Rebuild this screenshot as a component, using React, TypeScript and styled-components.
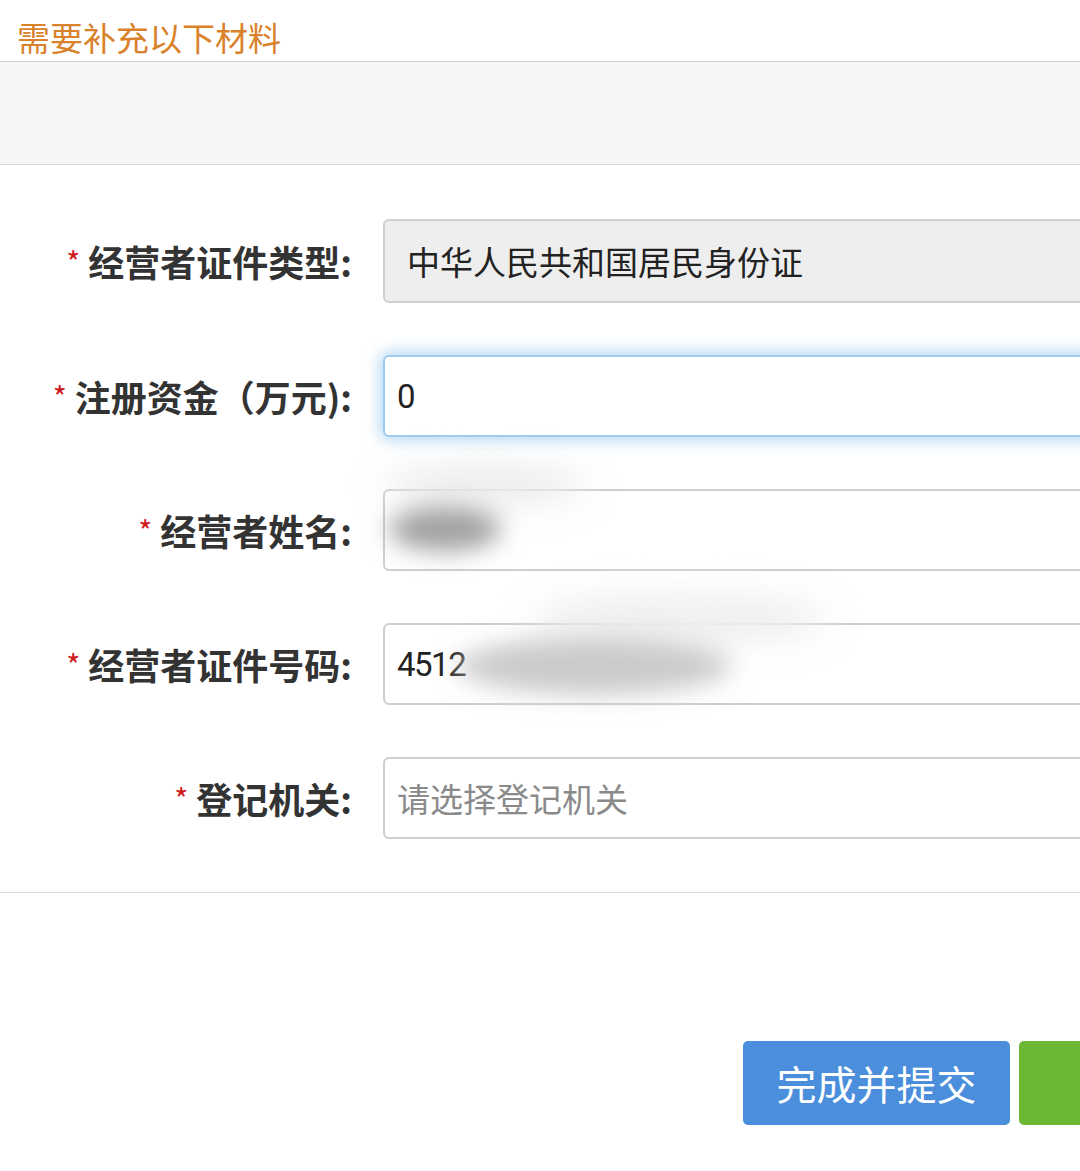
import styled, { createGlobalStyle } from "styled-components";

const GlobalStyle = createGlobalStyle`
  html, body {
    margin: 0;
    padding: 0;
    background: #fff;
    overflow: hidden;
  }
  body {
    font-family: "Noto Sans CJK SC", "Noto Sans", sans-serif;
    color: #333;
  }
`;

type FieldType = {
  label: string;
  value?: string;
  placeholder?: string;
  variant?: "readonly" | "focus" | "normal";
  blur?: "name" | "id";
};

const fields: FieldType[] = [
  { label: "经营者证件类型:", value: "中华人民共和国居民身份证", variant: "readonly" },
  { label: "注册资金（万元):", value: "0", variant: "focus" },
  { label: "经营者姓名:", value: "", blur: "name" },
  { label: "经营者证件号码:", value: "4512", blur: "id" },
  { label: "登记机关:", placeholder: "请选择登记机关" },
];

const App = () => {
  return (
    <Page>
      <GlobalStyle />
      <Header>
        <Title>需要补充以下材料</Title>
      </Header>
      <Band />
      <Form>
        {fields.map((f) => (
          <Row key={f.label}>
            <Label>
              <Star>*</Star>
              {f.label}
            </Label>
            <Box $variant={f.variant || "normal"}>
              {f.placeholder ? (
                <Placeholder>{f.placeholder}</Placeholder>
              ) : (
                <Value $latin={f.variant !== "readonly"} $indent={f.variant === "readonly"}>
                  {f.value}
                </Value>
              )}
              {f.blur === "name" && (
                <>
                  <Haze $left={0} $top={-26} $w={200} $h={40} $c="#ececec" />
                  <Smudge $left={4} $top={16} $w={112} $h={44} $c="#a0a0a0" />
                </>
              )}
              {f.blur === "id" && (
                <>
                  <Haze $left={150} $top={-32} $w={290} $h={52} $c="#efefef" />
                  <Smudge $left={72} $top={12} $w={274} $h={58} $c="#cbcbcb" />
                </>
              )}
            </Box>
          </Row>
        ))}
      </Form>
      <Footer>
        <SubmitButton>完成并提交</SubmitButton>
        <GreenButton />
      </Footer>
    </Page>
  );
};

const Page = styled.div`
  width: 1080px;
  min-height: 1171px;
  overflow: hidden;
`;

const Header = styled.div`
  height: 61px;
  display: flex;
  align-items: flex-end;
  padding-left: 17px;
  border-bottom: 1px solid #d2d2d2;
`;

const Title = styled.div`
  font-size: 33px;
  line-height: 1;
  padding-bottom: 7px;
  color: #d9822b;
  font-weight: 400;
`;

const Band = styled.div`
  height: 102px;
  background: #f5f6f8;
  border-bottom: 1px solid #d6d6d6;
`;

const Form = styled.div`
  display: flex;
  flex-direction: column;
  gap: 52px;
  padding: 54px 0 53px;
  border-bottom: 1px solid #dcdcdc;
`;

const Row = styled.div`
  display: flex;
  align-items: center;
`;

const Label = styled.div`
  width: 352px;
  flex-shrink: 0;
  text-align: right;
  font-size: 36px;
  font-weight: 700;
  color: #333;
  white-space: nowrap;
`;

const Star = styled.span`
  color: #d0191b;
  font-size: 30px;
  font-weight: 400;
  vertical-align: 3px;
  margin-right: 8px;
`;

const Box = styled.div<{ $variant: "readonly" | "focus" | "normal" }>`
  position: relative;
  margin-left: 31px;
  width: 760px;
  flex-shrink: 0;
  height: ${(p) => (p.$variant === "readonly" ? "84px" : "82px")};
  box-sizing: border-box;
  display: flex;
  align-items: center;
  padding: 0 12px;
  border-radius: 6px;
  border: 2px solid ${(p) => (p.$variant === "focus" ? "#9ccbef" : "#cfcfcf")};
  background: ${(p) => (p.$variant === "readonly" ? "#eeeeee" : "#fff")};
  box-shadow: ${(p) =>
    p.$variant === "focus"
      ? "0 0 14px 4px rgba(102, 175, 233, 0.45)"
      : "none"};
`;

const Value = styled.span<{ $latin: boolean; $indent: boolean }>`
  font-family: ${(p) =>
    p.$latin
      ? `Roboto, "Noto Sans CJK SC", sans-serif`
      : `"Noto Sans CJK SC", sans-serif`};
  font-size: 33px;
  color: #222;
  padding-left: ${(p) => (p.$indent ? "10px" : "0")};
  letter-spacing: ${(p) => (p.$latin ? "-1.5px" : "0")};
`;

const Placeholder = styled.span`
  font-size: 33px;
  color: #8a8a8a;
`;

const Smudge = styled.span<{ $left: number; $top: number; $w: number; $h: number; $c: string }>`
  position: absolute;
  left: ${(p) => p.$left}px;
  top: ${(p) => p.$top}px;
  width: ${(p) => p.$w}px;
  height: ${(p) => p.$h}px;
  background: ${(p) => p.$c};
  border-radius: 50%;
  filter: blur(12px);
  pointer-events: none;
`;

const Haze = styled(Smudge)`
  filter: blur(16px);
`;

const Footer = styled.div`
  display: flex;
  gap: 9px;
  padding: 148px 0 0 743px;
`;

const SubmitButton = styled.button`
  width: 267px;
  height: 84px;
  flex-shrink: 0;
  border: none;
  border-radius: 5px;
  background: #4a8edc;
  color: #fff;
  font-family: "Noto Sans CJK SC", sans-serif;
  font-size: 40px;
  cursor: pointer;
`;

const GreenButton = styled.button`
  width: 267px;
  height: 84px;
  flex-shrink: 0;
  border: none;
  border-radius: 5px;
  background: #6cb834;
`;

export default App;
